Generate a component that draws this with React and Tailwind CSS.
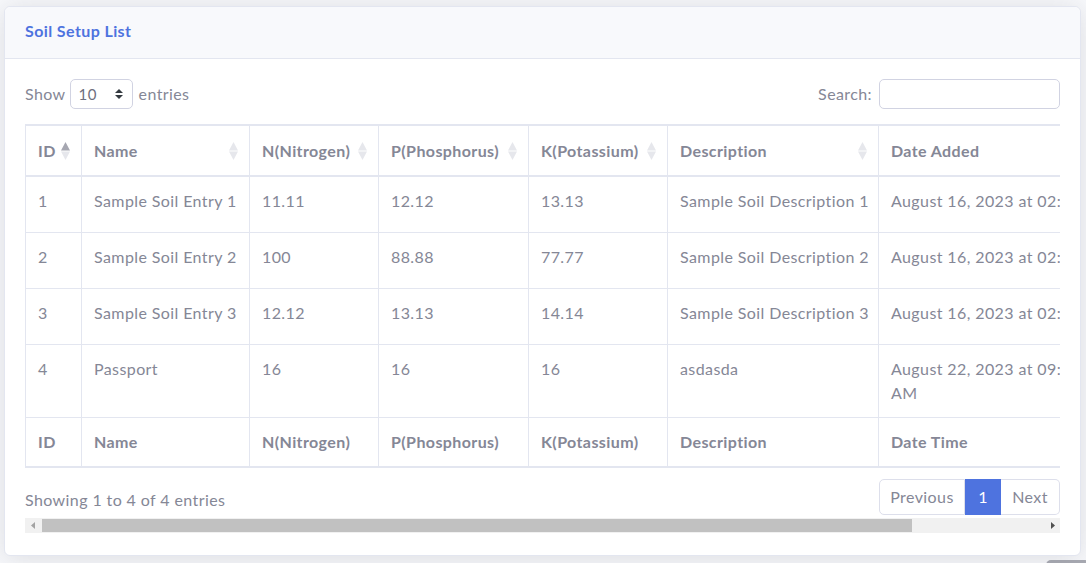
import React from "react";

const rows = [
  {
    id: 1,
    name: "Sample Soil Entry 1",
    n: "11.11",
    p: "12.12",
    k: "13.13",
    desc: "Sample Soil Description 1",
    date: "August 16, 2023 at 02:31",
  },
  {
    id: 2,
    name: "Sample Soil Entry 2",
    n: "100",
    p: "88.88",
    k: "77.77",
    desc: "Sample Soil Description 2",
    date: "August 16, 2023 at 02:31",
  },
  {
    id: 3,
    name: "Sample Soil Entry 3",
    n: "12.12",
    p: "13.13",
    k: "14.14",
    desc: "Sample Soil Description 3",
    date: "August 16, 2023 at 02:31",
  },
  {
    id: 4,
    name: "Passport",
    n: "16",
    p: "16",
    k: "16",
    desc: "asdasda",
    date: "August 22, 2023 at 09:14 AM",
  },
];

const columns = [
  { label: "ID", foot: "ID", width: "w-[56px]", active: true },
  { label: "Name", foot: "Name", width: "w-[168px]" },
  { label: "N(Nitrogen)", foot: "N(Nitrogen)", width: "w-[129px]" },
  { label: "P(Phosphorus)", foot: "P(Phosphorus)", width: "w-[150px]" },
  { label: "K(Potassium)", foot: "K(Potassium)", width: "w-[139px]" },
  { label: "Description", foot: "Description", width: "w-[211px]" },
  { label: "Date Added", foot: "Date Time", width: "w-[228px]", nosort: true },
  { label: "Action", foot: "Action", width: "w-[114px]", nosort: true },
];

const SortIcon = ({ active }) => (
  <svg
    width="9"
    height="18"
    viewBox="0 0 9 18"
    className="absolute right-[11px] top-1/2 -translate-y-1/2"
  >
    <path d="M4.5 0 L9 8.5 H0 Z" fill={active ? "#a6a7b1" : "#e6e7ec"} />
    <path d="M4.5 18 L9 9.5 H0 Z" fill="#e6e7ec" />
  </svg>
);

const cell = "whitespace-nowrap border border-[#e3e6f0] px-3 py-3 align-top";

const App = () => {
  return (
    <div
      className="h-[563px] overflow-hidden bg-[#f8f9fc] pl-[4px] pr-[5px] pt-[6px] text-[16px] tracking-[0.4px] text-[#858796]"
      style={{ fontFamily: "Lato, 'Open Sans', sans-serif" }}
    >
      <div className="rounded-[6px] border border-[#e3e6f0] bg-white shadow-[0_0.15rem_1.75rem_0_rgba(58,59,69,0.15)]">
        {/* card header */}
        <div className="flex h-[52px] items-center rounded-t-[6px] border-b border-[#e3e6f0] bg-[#f8f9fc] px-5 pb-[3px]">
          <h6 className="font-bold text-[#4e73df]">Soil Setup List</h6>
        </div>

        <div className="px-5 pt-5 pb-[22px]">
          <div className="overflow-hidden">
            {/* controls */}
            <div className="mb-[15px] flex items-center justify-between">
              <label className="flex items-center">
                Show
                <div className="ml-[4px] mr-[6px] flex h-[30px] w-[63px] items-center justify-between rounded-[5px] border border-[#d1d3e2] pl-[8px] pr-[8px] text-[15px] text-[#6e707e]">
                  <span>10</span>
                  <svg width="10" height="12" viewBox="0 0 10 12">
                    <path d="M5 1 L9 5 H1 Z" fill="#343a40" />
                    <path d="M5 11 L9 7 H1 Z" fill="#343a40" />
                  </svg>
                </div>
                entries
              </label>
              <label className="flex items-center">
                Search:
                <input
                  type="search"
                  className="ml-[7px] h-[30px] w-[181px] rounded-[5px] border border-[#d1d3e2] px-2 text-sm outline-none"
                />
              </label>
            </div>

            {/* table */}
            <table className="w-[1195px] table-fixed border-collapse border-y-2 border-l border-[#e3e6f0]">
              <thead>
                <tr>
                  {columns.map((c) => (
                    <th
                      key={c.label}
                      className={`${c.width} relative h-[51px] whitespace-nowrap border border-b-2 border-[#e3e6f0] px-3 text-left align-middle font-bold`}
                    >
                      {c.label}
                      {!c.nosort && <SortIcon active={c.active} />}
                    </th>
                  ))}
                </tr>
              </thead>
              <tbody>
                {rows.map((r) => (
                  <tr key={r.id}>
                    <td className={`${cell} h-[56px]`}>{r.id}</td>
                    <td className={cell}>{r.name}</td>
                    <td className={cell}>{r.n}</td>
                    <td className={cell}>{r.p}</td>
                    <td className={cell}>{r.k}</td>
                    <td className={cell}>{r.desc}</td>
                    <td className="border border-[#e3e6f0] px-3 py-3 align-top">{r.date}</td>
                    <td className={cell}>
                      <button className="rounded bg-[#4e73df] px-2 py-1 text-sm text-white">Edit</button>
                    </td>
                  </tr>
                ))}
              </tbody>
              <tfoot>
                <tr>
                  {columns.map((c) => (
                    <th
                      key={c.foot}
                      className="h-[50px] whitespace-nowrap border border-[#e3e6f0] px-3 text-left align-middle font-bold"
                    >
                      {c.foot}
                    </th>
                  ))}
                </tr>
              </tfoot>
            </table>

            {/* info + pagination */}
            <div className="mt-[11px] mb-[3px] flex items-start justify-between">
              <div className="pt-[9px]">Showing 1 to 4 of 4 entries</div>
              <div className="flex h-[36px]">
                <span className="flex w-[86px] items-center justify-center rounded-l-[5px] border border-[#dddfeb] bg-white">
                  Previous
                </span>
                <span className="flex w-[36px] items-center justify-center border border-[#4e73df] bg-[#4e73df] text-white">
                  1
                </span>
                <span className="flex w-[59px] items-center justify-center rounded-r-[5px] border border-l-0 border-[#dddfeb] bg-white">
                  Next
                </span>
              </div>
            </div>
          </div>

          {/* horizontal scrollbar */}
          <div className="flex h-[15px] bg-[#f1f1f1]">
            <div className="flex w-[15px] items-center justify-center">
              <svg width="4" height="7" viewBox="0 0 4 7">
                <path d="M0 3.5 L4 0 V7 Z" fill="#a3a3a3" />
              </svg>
            </div>
            <div className="flex-1 py-[1px] pl-[2px]">
              <div className="h-full w-[870px] bg-[#c1c1c1]" />
            </div>
            <div className="flex w-[15px] items-center justify-center">
              <svg width="4" height="7" viewBox="0 0 4 7">
                <path d="M4 3.5 L0 0 V7 Z" fill="#505050" />
              </svg>
            </div>
          </div>
        </div>
      </div>

      {/* scroll-to-top button peeking in */}
      <div className="fixed bottom-[-41px] right-[-4px] h-[44px] w-[44px] rounded-[5px] bg-[rgba(90,92,105,0.5)]" />
    </div>
  );
};

export default App;
